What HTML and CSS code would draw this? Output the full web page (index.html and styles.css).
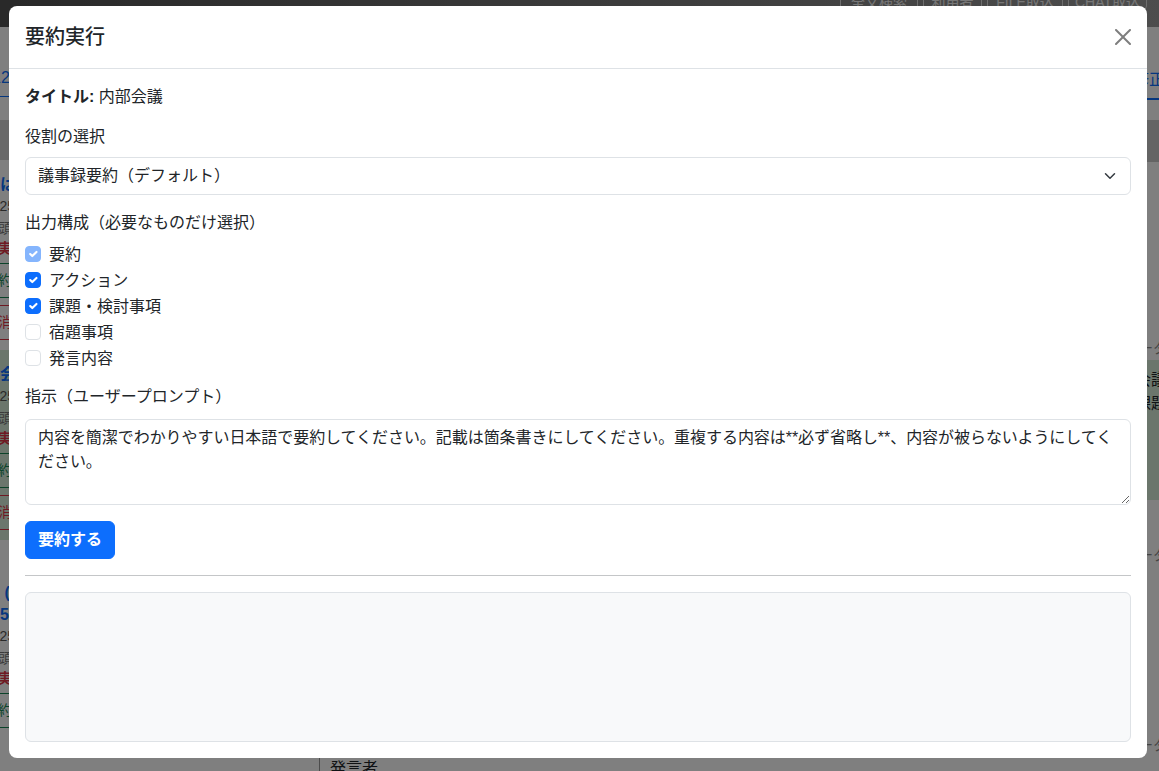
FILE: index.html
```html
<!DOCTYPE html>
<html lang="ja">
<head>
<meta charset="utf-8">
<title>要約実行</title>
<link rel="stylesheet" href="styles.css">
</head>
<body>
<div class="page">
  <header class="navbar">
    <div class="nav-btns">
      <span class="nbtn">全文検索</span>
      <span class="nbtn">利用者</span>
      <span class="nbtn">FILE取込</span>
      <span class="nbtn">CHAT取込</span>
    </div>
  </header>
  <div class="layout">
    <aside class="sidebar">
      <div class="side-top"><span class="pg">12</span></div>
      <div class="side-band"></div>
      <div class="card">
        <div class="c-title">議は定例</div>
        <div class="c-date">2025/06/02</div>
        <div class="c-meta">冒頭の説明</div>
        <div class="c-state">未実行</div>
        <div class="c-btn green">要約</div>
        <div class="c-btn red">取消</div>
      </div>
      <div class="card sel">
        <div class="c-title">部会報告</div>
        <div class="c-date">2025/06/02</div>
        <div class="c-meta">冒頭の説明</div>
        <div class="c-state">未実行</div>
        <div class="c-btn green">要約</div>
        <div class="c-btn red">取消</div>
      </div>
      <div class="card third">
        <div class="c-title">週 (定例)</div>
        <div class="c-title">※5/06</div>
        <div class="c-date">2025/06/02</div>
        <div class="c-meta">冒頭の説明</div>
        <div class="c-state">未実行</div>
        <div class="c-btn green">要約</div>
      </div>
    </aside>
    <main class="main">
      <div class="tabs"><span class="tab">修正</span></div>
      <div class="main-band"></div>
      <div class="row r1"><span class="muted">データ</span></div>
      <div class="row sel"><span>会議</span><span>課題</span></div>
      <div class="row r3"><span class="muted">データ</span></div>
      <div class="row r4"><span class="muted">データ</span></div>
      <div class="speaker">発言者</div>
    </main>
  </div>
</div>
<div class="backdrop"></div>

<div class="modal">
  <div class="modal-dialog">
    <div class="modal-header">
      <h5 class="modal-title">要約実行</h5>
      <button class="btn-close" type="button" aria-label="閉じる">
        <svg viewBox="0 0 16 16" width="16" height="16"><path d="M.293.293a1 1 0 0 1 1.414 0L8 6.586 14.293.293a1 1 0 1 1 1.414 1.414L9.414 8l6.293 6.293a1 1 0 0 1-1.414 1.414L8 9.414l-6.293 6.293a1 1 0 0 1-1.414-1.414L6.586 8 .293 1.707a1 1 0 0 1 0-1.414z"/></svg>
      </button>
    </div>
    <div class="modal-body">
      <p class="title-line"><strong>タイトル:</strong> 内部会議</p>

      <div class="field">
        <div class="form-label">役割の選択</div>
        <div class="select">
          <span class="select-text">議事録要約（デフォルト）</span>
          <svg class="chev" viewBox="0 0 16 16" width="12" height="12"><path d="m2 5 6 6 6-6" fill="none" stroke="#343a40" stroke-width="2" stroke-linecap="round" stroke-linejoin="round"/></svg>
        </div>
      </div>

      <div class="form-label">出力構成（必要なものだけ選択）</div>
      <div class="checks">
        <label class="form-check"><span class="box checked disabled"><svg viewBox="0 0 20 20"><path d="m6 10 3 3 6-6" fill="none" stroke="#fff" stroke-width="3" stroke-linecap="round" stroke-linejoin="round"/></svg></span>要約</label>
        <label class="form-check"><span class="box checked"><svg viewBox="0 0 20 20"><path d="m6 10 3 3 6-6" fill="none" stroke="#fff" stroke-width="3" stroke-linecap="round" stroke-linejoin="round"/></svg></span>アクション</label>
        <label class="form-check"><span class="box checked"><svg viewBox="0 0 20 20"><path d="m6 10 3 3 6-6" fill="none" stroke="#fff" stroke-width="3" stroke-linecap="round" stroke-linejoin="round"/></svg></span>課題・検討事項</label>
        <label class="form-check"><span class="box"></span>宿題事項</label>
        <label class="form-check"><span class="box"></span>発言内容</label>
      </div>

      <div class="form-label prompt-label">指示（ユーザープロンプト）</div>
      <textarea class="prompt" rows="3">内容を簡潔でわかりやすい日本語で要約してください。記載は箇条書きにしてください。重複する内容は**必ず省略し**、内容が被らないようにしてください。</textarea>

      <button class="btn-primary" type="button">要約する</button>

      <hr class="divider">

      <div class="result"></div>
    </div>
  </div>
</div>
</body>
</html>
```

FILE: styles.css
```css
* { box-sizing: border-box; }

html, body {
  margin: 0;
  height: 100%;
  overflow: hidden;
}

body {
  font-family: "Liberation Sans", "Noto Sans CJK JP", sans-serif;
  font-size: 16px;
  line-height: 1.5;
  color: #212529;
  background: #fff;
}

/* ---------- background page ---------- */
.page {
  height: 100vh;
  display: flex;
  flex-direction: column;
}

.navbar {
  height: 27px;
  flex: none;
  background: linear-gradient(90deg, #525252, #9a9a9a);
  display: flex;
  justify-content: flex-end;
  align-items: flex-start;
  padding-right: 12px;
}

.nav-btns {
  display: flex;
  gap: 5px;
  margin-top: -14px;
}

.nbtn {
  border: 1px solid #ddd;
  border-radius: 4px;
  color: #eee;
  font-size: 14px;
  line-height: 14px;
  height: 24px;
  display: flex;
  align-items: flex-end;
  justify-content: center;
}
.nbtn:nth-child(1) { width: 78px; }
.nbtn:nth-child(2) { width: 59px; }
.nbtn:nth-child(3) { width: 76px; }
.nbtn:nth-child(4) { width: 79px; }

.layout {
  flex: 1;
  display: flex;
  min-height: 0;
}

.sidebar {
  width: 400px;
  flex: none;
  border-right: 1px solid #999;
  margin-left: -80px;
  display: flex;
  flex-direction: column;
}

.side-top {
  height: 70px;
  flex: none;
  border-bottom: 1px solid #0d6efd;
  display: flex;
  align-items: flex-end;
  padding: 0 0 6px 72px;
}
.pg { color: #0d6efd; font-size: 16px; line-height: 24px; }

.side-band {
  height: 40px;
  flex: none;
  background: #d3d3d3;
  margin-top: 23px;
}

.card {
  padding: 14px 0 10px 64px;
  font-size: 14px;
  flex: none;
  white-space: nowrap;
}
.card.sel { background: #d6ecd9; }
.card.third { margin-top: 28px; }

.c-title { color: #0d6efd; font-weight: 700; font-size: 16px; line-height: 22px; }
.c-date { color: #555; line-height: 20px; }
.c-meta { color: #777; line-height: 24px; }
.c-state { color: #dc3545; font-weight: 700; line-height: 16px; }
.c-btn {
  margin-top: 7px;
  height: 35px;
  display: flex;
  align-items: center;
  border: 1px solid;
  border-left: none;
  width: 300px;
}
.c-btn.green { color: #198754; border-color: #198754; }
.c-btn.red { color: #dc3545; border-color: #dc3545; }

.main {
  flex: 1;
  display: flex;
  flex-direction: column;
  min-width: 0;
}

.tabs {
  height: 73px;
  flex: none;
  display: flex;
  justify-content: flex-end;
  align-items: flex-end;
}
.tab {
  color: #0d6efd;
  border-bottom: 2px solid #0d6efd;
  line-height: 24px;
  padding: 0 0 6px;
  margin-right: -6px;
}

.main-band {
  height: 42px;
  flex: none;
  background: #c8c8c8;
  margin-top: 20px;
}

.row {
  flex: none;
  display: flex;
  flex-direction: column;
  align-items: flex-end;
  justify-content: flex-end;
  padding-bottom: 2px;
  margin-right: -8px;
  line-height: 20px;
}
.row.r1 { height: 198px; }
.row.sel {
  height: 140px;
  background: #d6ecd9;
  justify-content: flex-start;
  padding-top: 8px;
  line-height: 24px;
}
.row.r3 { height: 67px; }
.row.r4 { height: 190px; }
.muted { color: #888; font-size: 14px; }

.speaker { padding-left: 10px; }

.backdrop {
  position: fixed;
  inset: 0;
  background: rgba(0, 0, 0, 0.5);
}

/* ---------- modal ---------- */
.modal {
  position: fixed;
  inset: 0;
}

.modal-dialog {
  width: 1138px;
  margin: 6px 0 0 9px;
  background: #fff;
  border-radius: 8px;
  display: flex;
  flex-direction: column;
}

.modal-header {
  display: flex;
  align-items: center;
  padding: 16px;
  border-bottom: 1px solid #dee2e6;
}

.modal-title {
  margin: 0;
  font-size: 20px;
  font-weight: 500;
  line-height: 30px;
}

.btn-close {
  margin: -8px -8px -8px auto;
  padding: 8px;
  width: 32px;
  height: 32px;
  border: 0;
  background: transparent;
  opacity: 0.5;
  display: flex;
  align-items: center;
  justify-content: center;
}
.btn-close svg { display: block; fill: #000; }

.modal-body {
  padding: 16px;
  display: flex;
  flex-direction: column;
  align-items: flex-start;
}

.title-line { margin: 0 0 16px; }
.title-line strong { font-weight: 700; }

.field { width: 100%; margin-bottom: 16px; }

.form-label { margin-bottom: 8px; }

.select {
  width: 100%;
  height: 38px;
  border: 1px solid #dee2e6;
  border-radius: 6px;
  padding: 6px 14px 6px 12px;
  display: flex;
  align-items: center;
}
.select-text { flex: 1; }
.chev { display: block; }

.checks {
  display: flex;
  flex-direction: column;
  margin-bottom: 12px;
}

.form-check {
  display: flex;
  align-items: flex-start;
  min-height: 24px;
  margin-bottom: 2px;
}

.box {
  width: 16px;
  height: 16px;
  margin-top: 3px;
  margin-right: 8px;
  border: 1px solid #dee2e6;
  border-radius: 4px;
  background: #fff;
  flex: none;
  display: flex;
}
.box svg { width: 100%; height: 100%; display: block; }
.box.checked { background: #0d6efd; border-color: #0d6efd; }
.box.disabled { opacity: 0.5; }

.prompt-label { margin-bottom: 10px; }

.prompt {
  width: 100%;
  height: 86px;
  border: 1px solid #dee2e6;
  border-radius: 6px;
  padding: 6px 12px;
  font-family: "Liberation Sans", "Noto Sans CJK JP", sans-serif;
  font-size: 16px;
  line-height: 24px;
  letter-spacing: -0.05px;
  color: #212529;
  margin: 0 0 16px;
  display: block;
}

.btn-primary {
  background: #0d6efd;
  border: 1px solid #0d6efd;
  color: #fff;
  border-radius: 6px;
  padding: 6px 12px;
  font-family: "Liberation Sans", "Noto Sans CJK JP", sans-serif;
  font-size: 16px;
  line-height: 24px;
  font-weight: 700;
}

.divider {
  width: 100%;
  margin: 16px 0;
  border: 0;
  border-top: 1px solid #c4c6c8;
}

.result {
  width: 100%;
  height: 150px;
  background: #f8f9fa;
  border: 1px solid #dee2e6;
  border-radius: 6px;
}
```
